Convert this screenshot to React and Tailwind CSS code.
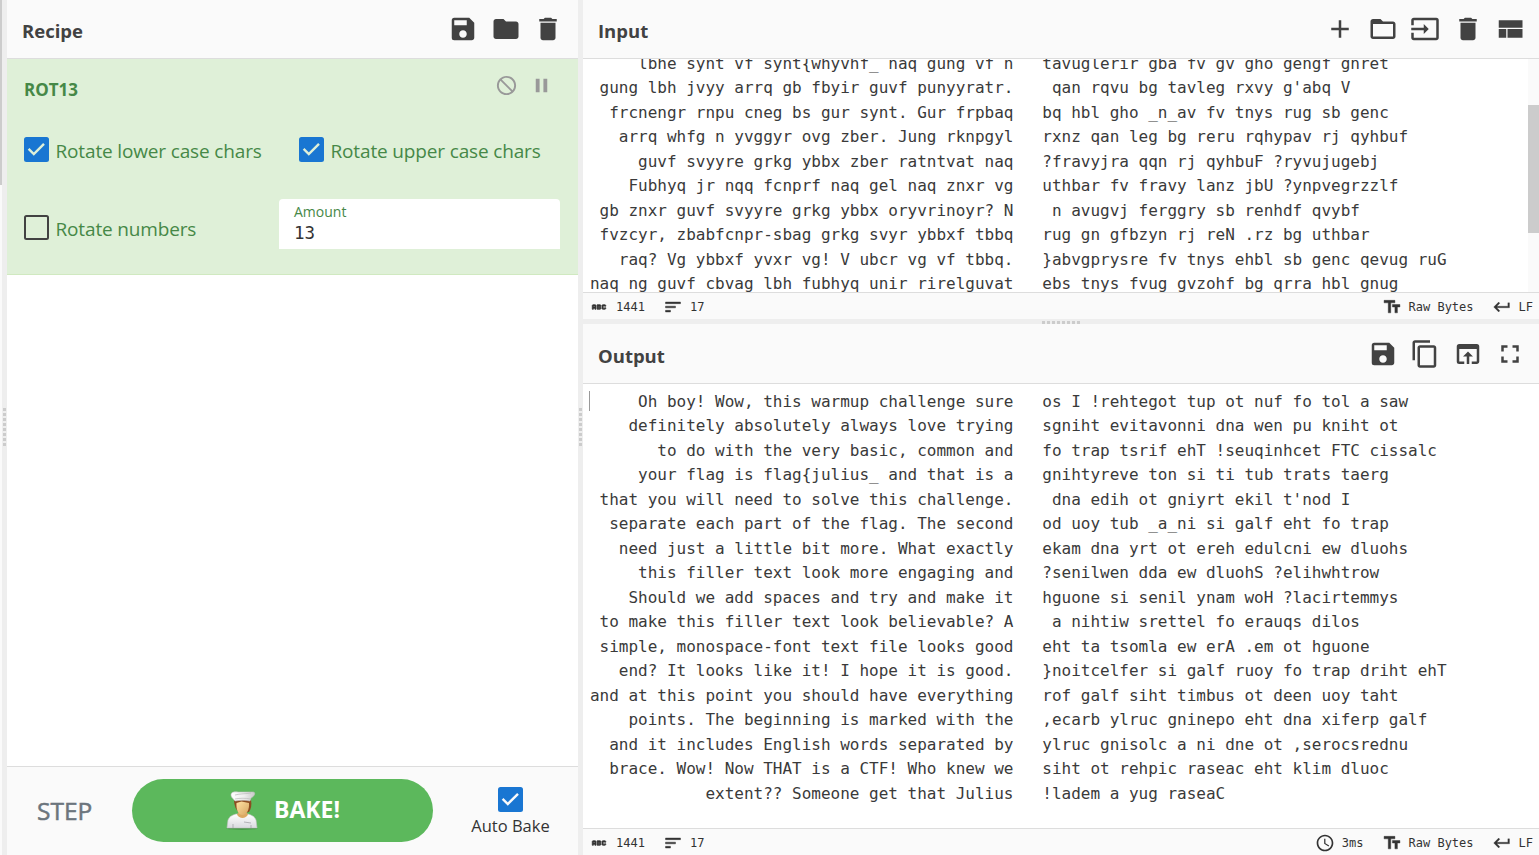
import React from "react";
import {
  MdSave, MdFolder, MdDelete, MdBlock, MdPause, MdAdd, MdInput, MdAbc, MdSort,
  MdTextFields, MdKeyboardReturn, MdAccessTime, MdContentCopy, MdOpenInBrowser, MdFullscreen,
} from "react-icons/md";

const rows = [
  ["Oh boy! Wow, this warmup challenge sure", "os I !rehtegot tup ot nuf fo tol a saw"],
  ["definitely absolutely always love trying", "sgniht evitavonni dna wen pu kniht ot"],
  ["to do with the very basic, common and", "fo trap tsrif ehT !seuqinhcet FTC cissalc"],
  ["your flag is flag{julius_ and that is a", "gnihtyreve ton si ti tub trats taerg"],
  ["that you will need to solve this challenge.", " dna edih ot gniyrt ekil t'nod I"],
  ["separate each part of the flag. The second", "od uoy tub _a_ni si galf eht fo trap"],
  ["need just a little bit more. What exactly", "ekam dna yrt ot ereh edulcni ew dluohs"],
  ["this filler text look more engaging and", "?senilwen dda ew dluohS ?elihwhtrow"],
  ["Should we add spaces and try and make it", "hguone si senil ynam woH ?lacirtemmys"],
  ["to make this filler text look believable? A", " a nihtiw srettel fo erauqs dilos"],
  ["simple, monospace-font text file looks good", "eht ta tsomla ew erA .em ot hguone"],
  ["end? It looks like it! I hope it is good.", "}noitcelfer si galf ruoy fo trap driht ehT"],
  ["and at this point you should have everything", "rof galf siht timbus ot deen uoy taht"],
  ["points. The beginning is marked with the", ",ecarb ylruc gninepo eht dna xiferp galf"],
  ["and it includes English words separated by", "ylruc gnisolc a ni dne ot ,serocsrednu"],
  ["brace. Wow! Now THAT is a CTF! Who knew we", "siht ot rehpic raseac eht klim dluoc"],
  ["extent?? Someone get that Julius", "!ladem a yug raseaC"],
];

const plainLines = rows.map(([left, right]) => left.padStart(44) + "   " + right);

const rot13 = (text) =>
  text.replace(/[a-z]/gi, (c) => {
    const base = c <= "Z" ? 65 : 97;
    return String.fromCharCode(((c.charCodeAt(0) - base + 13) % 26) + base);
  });

const cipherLines = plainLines.slice(3, 13).map(rot13);

function Code({ lines }) {
  return (
    <div className="font-['DejaVu_Sans_Mono',monospace] text-[16px] leading-[24.5px] tracking-[-0.008px] text-[#3a3a3a]">
      {lines.map((line, i) => (
        <div key={i} className="h-[24.5px] whitespace-pre">{line}</div>
      ))}
    </div>
  );
}

function FolderOutline() {
  return (
    <svg viewBox="0 0 24 24" fill="currentColor" className="size-[30px]">
      <path d="M20 6h-8l-2-2H4c-1.1 0-1.99.9-1.99 2L2 18c0 1.1.9 2 2 2h16c1.1 0 2-.9 2-2V8c0-1.100-.9-2-2-2zm0 12H4V8h16v10z" />
      <path d="M4 6h6l2 2H4z" />
    </svg>
  );
}

function LayoutIcon() {
  return (
    <svg viewBox="0 0 24 24" fill="currentColor" className="size-[30px]">
      <path d="M3 19h6v-7H3v7zm7 0h12v-7H10v7zM3 5v6h19V5H3z" />
    </svg>
  );
}

function Chef() {
  return (
    <svg viewBox="0 0 34 40" className="h-10 w-[34px]">
      <defs>
        <linearGradient id="coat" x1="0" y1="0" x2="0" y2="1">
          <stop offset="0" stopColor="#ffffff" />
          <stop offset="1" stopColor="#d9d9df" />
        </linearGradient>
        <linearGradient id="skin" x1="0" y1="0" x2="1" y2="1">
          <stop offset="0" stopColor="#ffe3a4" />
          <stop offset="1" stopColor="#d7a561" />
        </linearGradient>
        <linearGradient id="hat" x1="0" y1="0" x2="1" y2="0">
          <stop offset="0" stopColor="#ffffff" />
          <stop offset="0.55" stopColor="#eeeeee" />
          <stop offset="1" stopColor="#c9c9c9" />
        </linearGradient>
      </defs>
      <ellipse cx="17" cy="38.500" rx="15.500" ry="1.200" fill="#39823b" opacity=".7" />
      <path d="M2 38l1-8c1-3 4-5 8-6h12c4 1 7 3 8 6l1 8z" fill="url(#coat)" stroke="#c2c2c5" strokeWidth=".6" />
      <path d="M12 24.500c2 4.500 9 4.500 11 0l-3-4h-5z" fill="#dca963" />
      <path d="M9 10h17c1 5 0 9-2 12l-5 1h-4c-4-2-6-8-6-13z" fill="#8c4c20" />
      <path d="M11.500 13l5-1.500 7.500 1.500c.5 6-2 12-6.500 12S11 19 11.500 13z" fill="url(#skin)" />
      <path d="M10 11L6.500 7C4.500 2 9 1.500 13 2h15c3 0 2 4-2 6l-1 3c-4-1-10-1-15 0z" fill="url(#hat)" stroke="#bdbdbd" strokeWidth=".6" />
      <path d="M10 9c5-1 11-1 15 0M10 5c5-1.500 11-1 16-2" fill="none" stroke="#b7b7b7" strokeWidth=".7" />
      <path d="M8 34v4M26 35v3M19 32l7 1" fill="none" stroke="#a5a5aa" strokeWidth=".8" />
    </svg>
  );
}

function PaneHeader({ title, children }) {
  return (
    <div className="flex h-[59px] shrink-0 items-center justify-between border-b border-[#ddd] bg-[#fafafa] pl-[15px]">
      <h2 className="pt-[3px] text-[18.5px] leading-6 font-bold text-[#424242]">{title}</h2>
      <div className="flex items-center gap-[12.4px] text-[#424242]">{children}</div>
    </div>
  );
}

function CheckBox({ checked, tick = "#dff0d8" }) {
  return checked ? (
    <span className="flex size-[25px] shrink-0 rounded-[2.5px] bg-[#1976d2]">
      <svg viewBox="0 0 25 25" className="size-[25px]">
        <path d="M4.600 11.800l5.200 5.200L20 6.800" fill="none" stroke={tick} strokeWidth="2.400" />
      </svg>
    </span>
  ) : (
    <span className="size-[25px] shrink-0 rounded-[2.5px] border-2 border-[#424242]" />
  );
}

function Option({ label, checked }) {
  return (
    <label className="flex h-[25px] items-center gap-[6.5px] text-[#468847]">
      <CheckBox checked={checked} />
      <span className="pt-[2px] text-[19px] leading-6 tracking-[-0.15px] whitespace-nowrap">{label}</span>
    </label>
  );
}

function StatusBar({ time }) {
  return (
    <div className="flex h-[27px] shrink-0 items-center justify-between border-t border-[#ddd] bg-[#fafafa] pr-[6px] pl-[7px] font-['DejaVu_Sans_Mono',monospace] text-[12px] text-[#333]">
      <div className="flex items-center pt-[2px]">
        <MdAbc className="size-[18px] stroke-current stroke-1 [&>path:first-child]:stroke-none" />
        <span className="ml-2">1441</span>
        <MdSort className="ml-[18px] size-5 stroke-current stroke-[0.5] [&>path:first-child]:stroke-none" />
        <span className="ml-[7px]">17</span>
      </div>
      <div className="flex items-center pt-[2px]">
        {time && (
          <>
            <MdAccessTime className="size-5" />
            <span className="mr-[18px] ml-[7px]">{time}</span>
          </>
        )}
        <MdTextFields className="size-5 stroke-current stroke-[0.5] [&>path:first-child]:stroke-none" />
        <span className="ml-[7px]">Raw Bytes</span>
        <MdKeyboardReturn className="ml-[18px] size-5 stroke-current stroke-[0.3] [&>path:first-child]:stroke-none" />
        <span className="ml-[7px]">LF</span>
      </div>
    </div>
  );
}

function GutterColumn() {
  return (
    <div className="flex h-full w-[5px] shrink-0 flex-col items-end gap-[2px] bg-[#eee] pt-[408px] pr-[1px]">
      {Array.from({ length: 8 }, (_, i) => (
        <i key={i} className="h-[3px] w-[3px] shrink-0 bg-[#ccc]" />
      ))}
    </div>
  );
}

export default function App() {
  return (
    <div className="flex h-[855px] w-[1539px] overflow-hidden bg-white font-['Open_Sans',sans-serif]">
      <div className="w-[2px] shrink-0 bg-[#fafafa]">
        <div className="h-[185px] bg-[#ccc]" />
      </div>
      <GutterColumn />

      <section className="flex w-[571px] shrink-0 flex-col">
        <PaneHeader title="Recipe">
          <MdSave className="size-[30px]" />
          <MdFolder className="size-[30px]" />
          <MdDelete className="mr-[15px] size-[30px]" />
        </PaneHeader>

        <div className="flex h-[216px] shrink-0 flex-col border-b border-[#d0e9c0] bg-[#dff0d8] px-[17px]">
          <div className="flex h-[53px] items-center justify-between">
            <h3 className="pt-[8px] text-[17px] font-bold text-[#468847]">ROT13</h3>
            <div className="flex items-center gap-3 pr-[8px] text-[#999]">
              <MdBlock className="size-[23px] -scale-x-100" />
              <MdPause className="size-[23px]" />
            </div>
          </div>
          <div className="flex pt-[25px]">
            <div className="w-[275px]"><Option label="Rotate lower case chars" checked /></div>
            <Option label="Rotate upper case chars" checked />
          </div>
          <div className="flex pt-[37px]">
            <div className="w-[255px] pt-[16px]"><Option label="Rotate numbers" /></div>
            <div className="flex h-[50px] w-[281px] flex-col rounded-t bg-white pt-[4px] pl-[15px]">
              <span className="text-[14px] leading-[18px] text-[#468847]">Amount</span>
              <span className="font-['DejaVu_Sans_Mono',monospace] text-[17.5px] leading-6 text-[#333]">13</span>
            </div>
          </div>
        </div>

        <div className="flex-1" />

        <div className="flex h-[89px] shrink-0 items-center border-t border-[#ddd] bg-[#fafafa] pb-[2px]">
          <div className="w-[125px] pt-[2px] pl-[30px] text-[24.5px] text-[#6c757d] [-webkit-text-stroke:0.5px_#6c757d]">STEP</div>
          <div className="flex h-[63px] w-[301px] items-center gap-[15px] rounded-full bg-[#5cb85c] pl-[93px] text-white">
            <Chef />
            <span className="pb-[1px] text-[23px] font-bold">BAKE!</span>
          </div>
          <div className="ml-[38px] flex w-[79px] flex-col items-center pt-[4px]">
            <CheckBox checked tick="#fafafa" />
            <span className="mt-[3px] text-[16.5px] leading-[22px] whitespace-nowrap text-[#333]">Auto Bake</span>
          </div>
        </div>
      </section>

      <GutterColumn />

      <div className="flex min-w-0 flex-1 flex-col">
        <section className="flex h-[319px] shrink-0 flex-col">
          <PaneHeader title="Input">
            <MdAdd className="size-[30px]" />
            <FolderOutline />
            <MdInput className="size-[30px]" />
            <MdDelete className="size-[30px]" />
            <div className="mr-[14px]"><LayoutIcon /></div>
          </PaneHeader>
          <div className="flex min-h-0 flex-1 justify-between overflow-hidden">
            <div className="-mt-[7.5px] pl-[7px]"><Code lines={cipherLines} /></div>
            <div className="w-[11px] bg-[#fafafa] pt-[46px]">
              <div className="h-[128px] bg-[#ccc]" />
            </div>
          </div>
          <StatusBar />
        </section>

        <div className="flex h-[5px] shrink-0 items-end justify-center gap-[2px] bg-[#eee]">
          {Array.from({ length: 8 }, (_, i) => (
            <i key={i} className="h-[3px] w-[3px] bg-[#ccc]" />
          ))}
        </div>

        <section className="flex min-h-0 flex-1 flex-col">
          <div className="flex shrink-0 flex-col">
            <div className="h-px bg-[#fafafa]" />
            <PaneHeader title="Output">
              <MdSave className="size-[30px]" />
              <MdContentCopy className="size-[30px]" />
              <MdOpenInBrowser className="size-[30px]" />
              <MdFullscreen className="mr-[14px] size-[30px]" />
            </PaneHeader>
          </div>
          <div className="flex min-h-0 flex-1 overflow-hidden pt-[5.5px] pl-[6px]">
            <div className="mt-[1.5px] h-5 w-px shrink-0 bg-[#999]" />
            <Code lines={plainLines} />
          </div>
          <StatusBar time="3ms" />
        </section>
      </div>
    </div>
  );
}
